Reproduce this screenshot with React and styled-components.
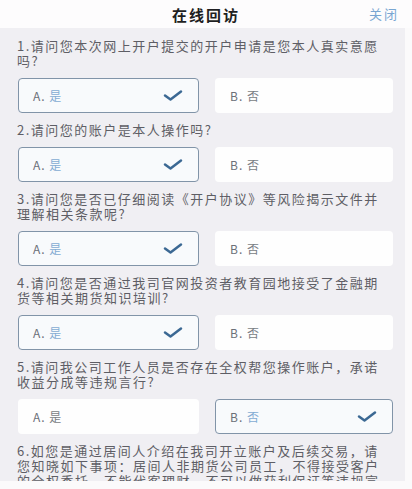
import styled, { createGlobalStyle } from 'styled-components';

const GlobalStyle = createGlobalStyle`
  html, body {
    margin: 0;
    padding: 0;
    background: #fbfafb;
  }
  body {
    font-family: 'Noto Sans CJK SC', 'Liberation Sans', sans-serif;
  }
`;

const Page = styled.div`
  width: 412px;
  height: 489px;
  overflow: hidden;
  background: #fbfafb;
`;

const Header = styled.div`
  height: 28px;
  display: flex;
  align-items: center;
  justify-content: center;
  position: relative;
  background: #fdfcfd;
`;

const Title = styled.div`
  font-size: 15px;
  font-weight: 700;
  letter-spacing: 2px;
  color: #1f1f22;
`;

const Close = styled.div`
  position: absolute;
  right: 13px;
  top: 4px;
  font-size: 13px;
  letter-spacing: 2px;
  color: #79a6d2;
`;

const Panel = styled.div`
  width: 405px;
  height: 453px;
  box-sizing: border-box;
  overflow: hidden;
  background: #f0eff3;
  padding: 1px 13px 0 17px;
`;

const Question = styled.p`
  margin: 9px 0 0;
  font-size: 13px;
  line-height: 15px;
  letter-spacing: 1.5px;
  color: #5e5e65;
  white-space: pre-line;
`;

const Options = styled.div`
  display: grid;
  grid-template-columns: 181px 178px;
  column-gap: 16px;
  margin-top: 10px;
  padding-left: 1px;
`;

const Option = styled.div`
  height: 35px;
  box-sizing: border-box;
  border-radius: 4px;
  display: flex;
  align-items: center;
  justify-content: space-between;
  padding: 0 15px 0 14px;
  background: ${(props) => (props.selected ? '#f8fafc' : '#fefefe')};
  border: ${(props) => (props.selected ? '1.5px solid #8194a8' : '1.5px solid transparent')};
`;

const Label = styled.span`
  font-size: 12px;
  color: #6c7079;
  letter-spacing: 1px;
`;

const Answer = styled.span`
  color: ${(props) => (props.selected ? '#84acd3' : '#7a7d84')};
`;

const Check = () => (
  <svg width="20" height="13" viewBox="0 0 20 13">
    <path
      d="M2 6.5 L7.5 10.5 L18 2.5"
      fill="none"
      stroke="#3b6893"
      strokeWidth="2.5"
      strokeLinecap="round"
      strokeLinejoin="round"
    />
  </svg>
);

const questions = [
  { text: '1.请问您本次网上开户提交的开户申请是您本人真实意愿\n吗?', answer: 'A' },
  { text: '2.请问您的账户是本人操作吗?', answer: 'A' },
  { text: '3.请问您是否已仔细阅读《开户协议》等风险揭示文件并\n理解相关条款呢?', answer: 'A' },
  { text: '4.请问您是否通过我司官网投资者教育园地接受了金融期\n货等相关期货知识培训?', answer: 'A' },
  { text: '5.请问我公司工作人员是否存在全权帮您操作账户，承诺\n收益分成等违规言行?', answer: 'B' },
  {
    text:
      '6.如您是通过居间人介绍在我司开立账户及后续交易，请\n您知晓如下事项：居间人非期货公司员工，不得接受客户\n的全权委托，不能代客理财，不可以做获利保证等违规宣',
  },
];

const App = () => (
  <Page>
    <GlobalStyle />
    <Header>
      <Title>在线回访</Title>
      <Close>关闭</Close>
    </Header>
    <Panel>
      {questions.map((q, i) => (
        <div key={i}>
          <Question>{q.text}</Question>
          {q.answer && (
            <Options>
              <Option selected={q.answer === 'A'}>
                <Label>
                  A. <Answer selected={q.answer === 'A'}>是</Answer>
                </Label>
                {q.answer === 'A' && <Check />}
              </Option>
              <Option selected={q.answer === 'B'}>
                <Label>
                  B. <Answer selected={q.answer === 'B'}>否</Answer>
                </Label>
                {q.answer === 'B' && <Check />}
              </Option>
            </Options>
          )}
        </div>
      ))}
    </Panel>
  </Page>
);

export default App;
